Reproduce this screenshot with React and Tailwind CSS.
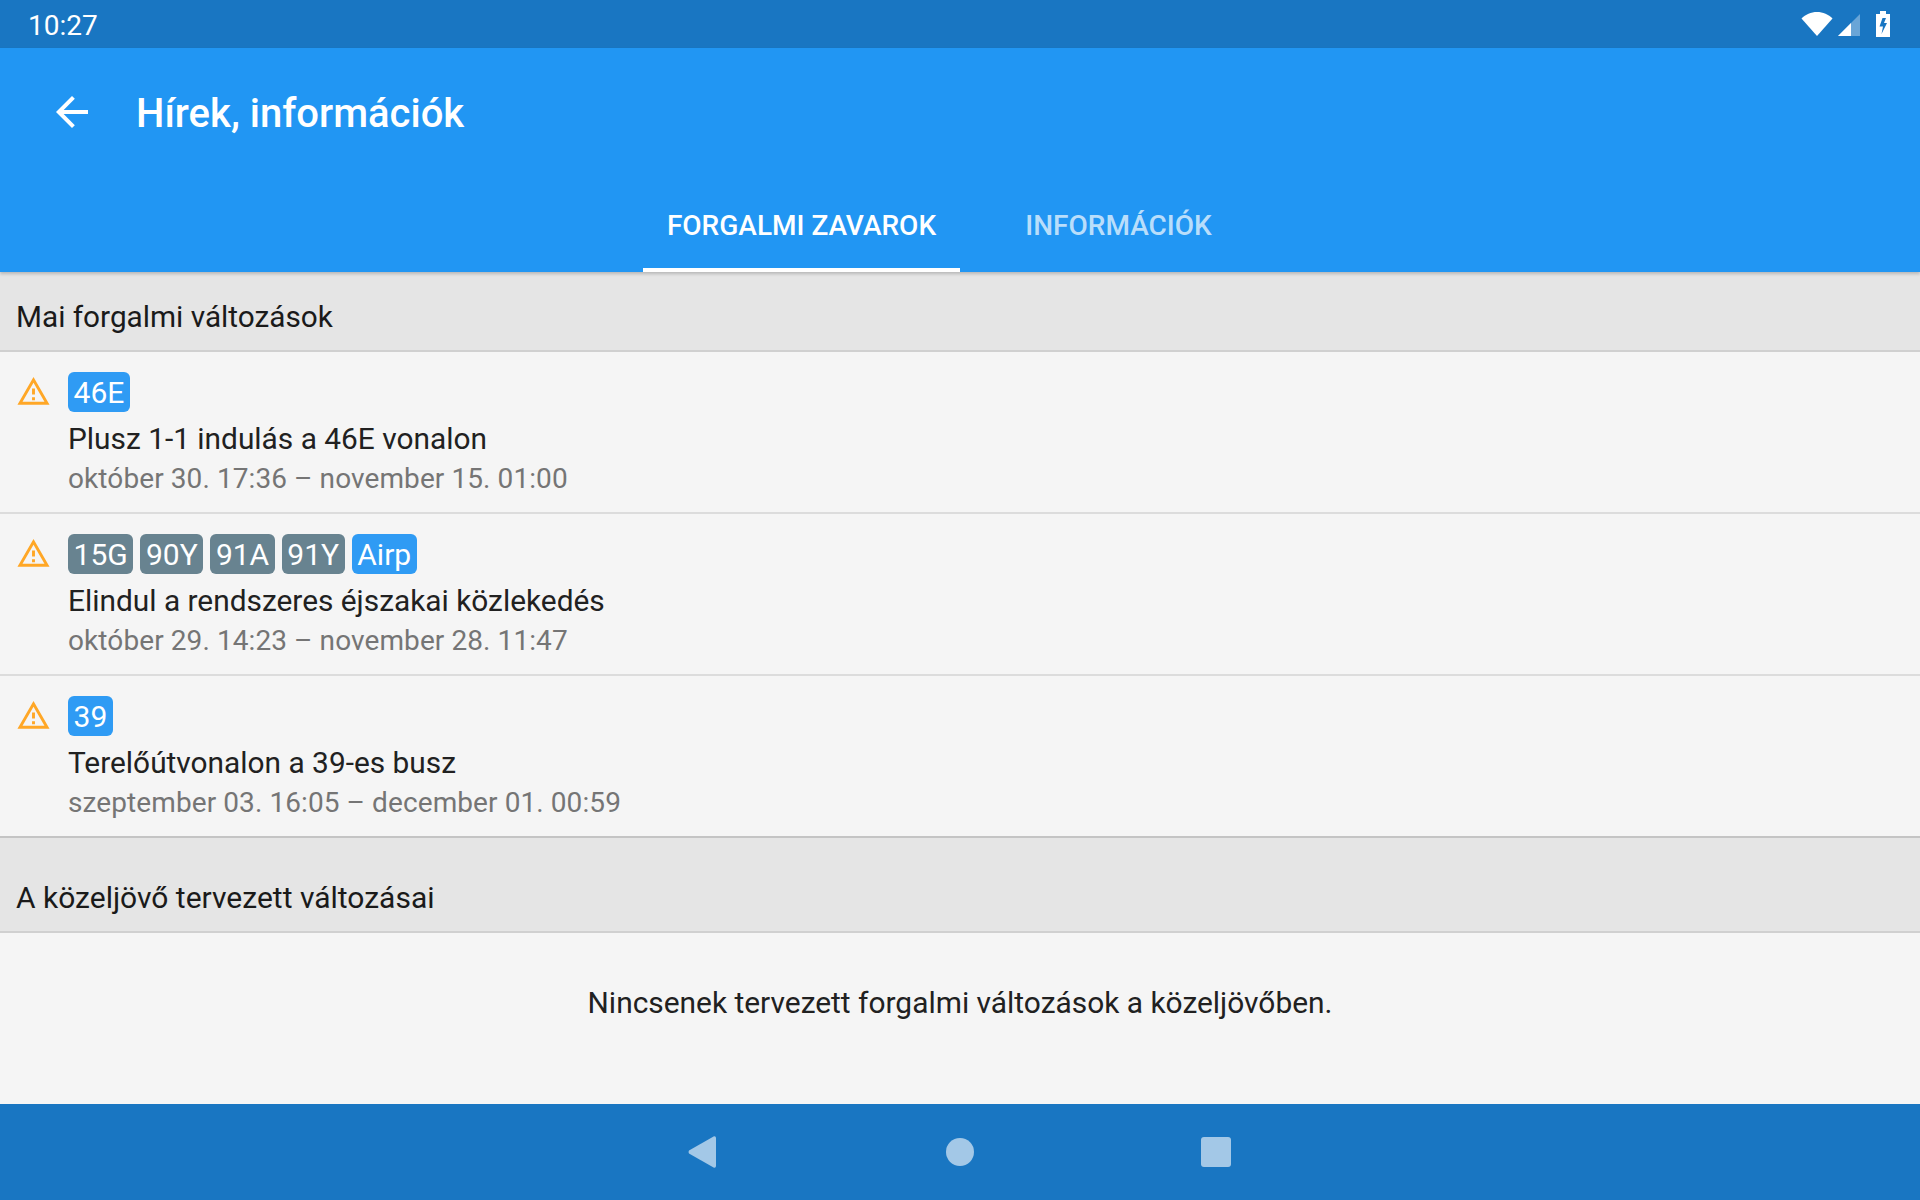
import React from 'react';

const notices = [
  {
    badges: [{ label: '46E', blue: true }],
    title: 'Plusz 1-1 indulás a 46E vonalon',
    date: 'október 30. 17:36 – november 15. 01:00',
  },
  {
    badges: [
      { label: '15G' },
      { label: '90Y' },
      { label: '91A' },
      { label: '91Y' },
      { label: 'Airp', blue: true },
    ],
    title: 'Elindul a rendszeres éjszakai közlekedés',
    date: 'október 29. 14:23 – november 28. 11:47',
  },
  {
    badges: [{ label: '39', blue: true }],
    title: 'Terelőútvonalon a 39-es busz',
    date: 'szeptember 03. 16:05 – december 01. 00:59',
  },
];

const WarningIcon = () => (
  <svg viewBox="0 0 24 24" className="w-[35px] h-[35px] fill-[#ffa726]">
    <path d="M1 21h22L12 2 1 21zm3.47-2L12 5.99 19.53 19H4.47zM11 16h2v2h-2zm0-6h2v4h-2z" />
  </svg>
);

const StatusBar = () => (
  <div className="h-12 bg-[#1976c2] flex items-center justify-between pl-[28px] pr-[30px] text-white">
    <span className="text-[28px] leading-none pt-[4px]">10:27</span>
    <div className="flex items-center">
      <svg viewBox="0 0 32 24" className="w-8 h-6 fill-white">
        <path d="M0.5 6.5C4.5 2.5 10 0 16 0s11.5 2.5 15.500 6.500L16 24z" />
      </svg>
      <svg viewBox="0 0 22 22" className="w-[22px] h-[22px] ml-[5px] mt-[2px]">
        <path d="M22 0v22H0z" className="fill-white/35" />
        <path d="M13 9v13H0z" className="fill-white" />
      </svg>
      <svg viewBox="0 0 14 26" className="w-[14px] h-[26px] ml-4 fill-white">
        <path fillRule="evenodd" d="M4 0h6v3h4v23H0V3h4zM6.500 7L3.500 15.500h3.500L5.500 23l5.500-11H8L10 7z" />
      </svg>
    </div>
  </div>
);

const AppBar = () => (
  <div className="h-[224px] bg-[#2196f3] flex flex-col text-white shadow-[0_2px_3px_rgba(0,0,0,0.2)] relative">
    <div className="h-[112px] flex items-center pl-12 pt-4">
      <svg viewBox="0 0 24 24" className="w-12 h-12 fill-white">
        <path d="M20 11H7.830l5.590-5.590L12 4l-8 8 8 8 1.410-1.410L7.830 13H20v-2z" />
      </svg>
      <span className="ml-[40px] text-[40px] font-medium leading-none mt-[4px]">Hírek, információk</span>
    </div>
    <div className="flex-1 w-[634px] mx-auto grid grid-cols-2 text-[28px] font-medium">
      <div className="flex items-center justify-center border-b-4 border-white pt-[24px]">FORGALMI ZAVAROK</div>
      <div className="flex items-center justify-center border-b-4 border-transparent pt-[24px] text-white/70">INFORMÁCIÓK</div>
    </div>
  </div>
);

const SectionHeader = ({ text, className }) => (
  <div className={`bg-[#e5e5e5] border-b-2 border-[#d0d0d0] flex pl-4 text-[#1a1a1a] ${className}`}>
    {text}
  </div>
);

const NoticeRow = ({ notice, last }) => (
  <div className={`h-[162px] flex pl-[16px] pt-[20px] ${last ? 'border-b-2 border-[#c4c4c4]' : 'border-b-2 border-[#dcdcdc]'}`}>
    <div className="w-[52px] pt-[2px]">
      <WarningIcon />
    </div>
    <div className="flex flex-col">
      <div className="flex gap-[7px]">
        {notice.badges.map((b) => (
          <span
            key={b.label}
            className={`h-10 px-[5.6px] rounded-[6px] text-white text-[30px] leading-[42px] ${b.blue ? 'bg-[#2f9bf4]' : 'bg-[#688390]'}`}
          >
            {b.label}
          </span>
        ))}
      </div>
      <div className="mt-[8px] text-[29.85px] leading-[38px] text-[#212121]">{notice.title}</div>
      <div className="text-[28px] leading-[40px] tracking-[0.09px] pt-[1px] text-[#757575]">{notice.date}</div>
    </div>
  </div>
);

const NavBar = () => (
  <div className="h-24 bg-[#1976c2] flex items-center justify-center">
    <svg viewBox="0 0 28 32" className="w-7 h-8 fill-[#a3c8e7] mr-[230px] -ml-[2px]">
      <path d="M26 0.300Q28 0 28 2V30Q28 32 26 31.700L1 17.500Q0 16 1 14.500z" />
    </svg>
    <div className="w-7 h-7 rounded-full bg-[#a3c8e7]" />
    <div className="w-[30px] h-[30px] rounded-[3px] bg-[#a3c8e7] ml-[227px]" />
  </div>
);

export default function App() {
  return (
    <div className="w-[1920px] h-[1200px] flex flex-col bg-[#f5f5f5] font-['Roboto',sans-serif] overflow-hidden">
      <StatusBar />
      <AppBar />
      <div className="flex-1 flex flex-col">
        <SectionHeader text="Mai forgalmi változások" className="h-[80px] items-center pt-[12px] text-[29.75px]" />
        {notices.map((n, i) => (
          <NoticeRow key={n.title} notice={n} last={i === notices.length - 1} />
        ))}
        <SectionHeader text="A közeljövő tervezett változásai" className="h-[95px] items-end pb-[11px] text-[30px]" />
        <div className="flex-1 flex justify-center pt-[52px] text-[29.9px] leading-[36px] text-[#212121]">
          Nincsenek tervezett forgalmi változások a közeljövőben.
        </div>
      </div>
      <NavBar />
    </div>
  );
}
